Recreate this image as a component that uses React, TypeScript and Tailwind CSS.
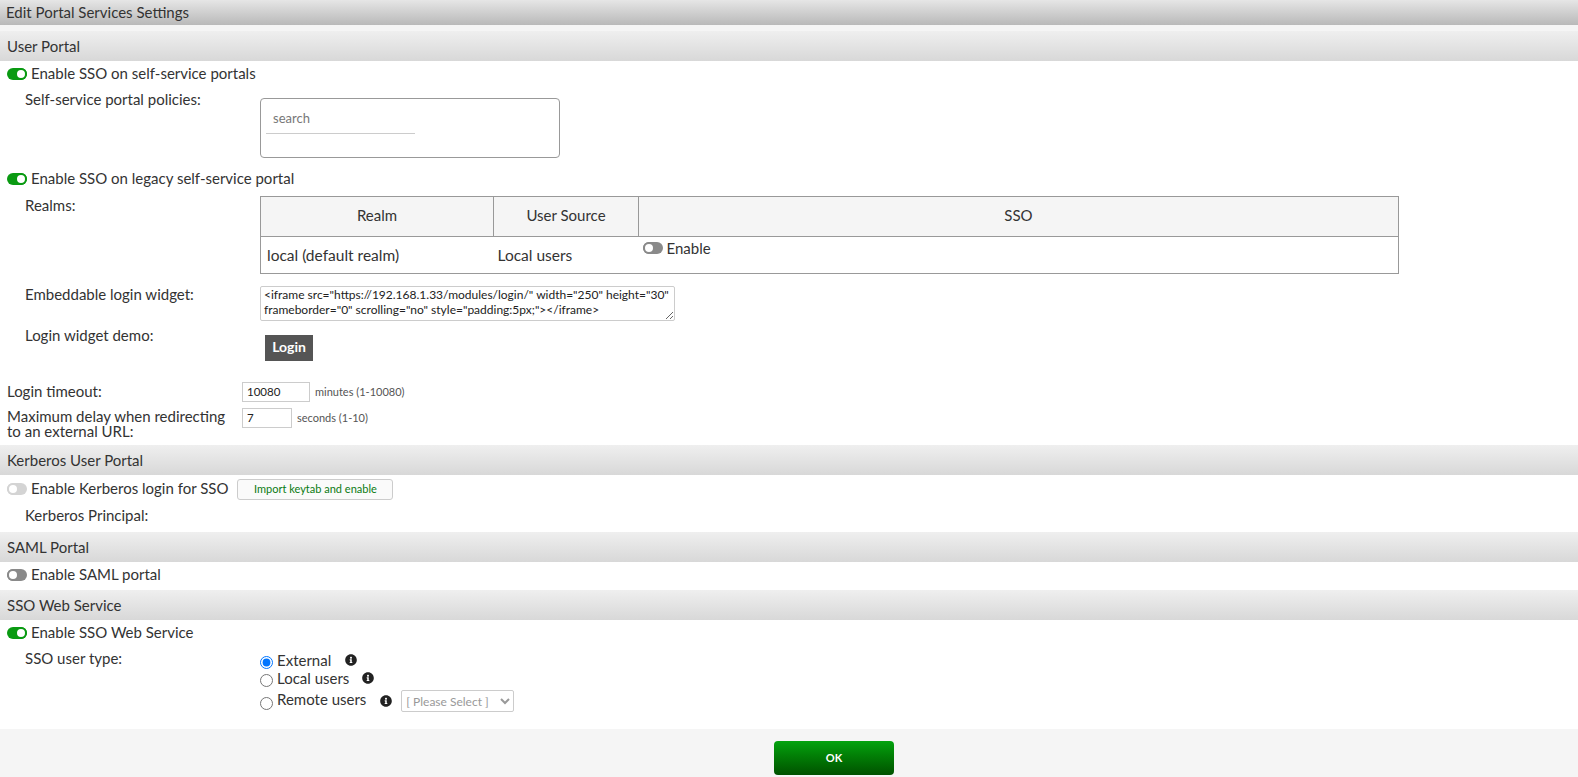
import { FaInfoCircle } from 'react-icons/fa'

const font = { fontFamily: 'Lato, "Open Sans", sans-serif' }

function Toggle({ state }: { state: 'on' | 'off' | 'disabled' }) {
  if (state === 'on') {
    return (
      <span className="flex justify-end items-center w-5 h-3 rounded-full bg-[#0a9a12] shrink-0">
        <span className="w-3 h-3 rounded-full bg-white border-2 border-[#0a9a12]" />
      </span>
    )
  }
  return (
    <span className={`flex items-center w-5 h-3 rounded-full shrink-0 ${state === 'off' ? 'bg-[#8a8a8a]' : 'bg-[#d4d4d4]'}`}>
      <span className={`w-3 h-3 rounded-full bg-white border-2 ${state === 'off' ? 'border-[#8a8a8a]' : 'border-[#d4d4d4]'}`} />
    </span>
  )
}

function SectionHeader({ title }: { title: string }) {
  return (
    <div className="h-[30px] flex items-center pl-[7px] bg-gradient-to-b from-[#efefef] to-[#d8d8d8] text-[15px] text-[#333]">
      {title}
    </div>
  )
}

function ToggleRow({ state, label, className = '' }: { state: 'on' | 'off' | 'disabled'; label: string; className?: string }) {
  return (
    <div className={`flex items-center gap-1 pl-[7px] h-[26px] text-[15px] text-[#333] ${className}`}>
      <Toggle state={state} />
      <span className="-translate-y-[1px]">{label}</span>
    </div>
  )
}

function Field({ label, children, className = '' }: { label: string; children?: React.ReactNode; className?: string }) {
  return (
    <div className={`flex ${className}`}>
      <div className="w-[260px] pl-[25px] text-[15px] text-[#333] leading-[20px] -translate-y-[1px] shrink-0">{label}</div>
      {children && <div className="flex-1 min-w-0">{children}</div>}
    </div>
  )
}

function RadioRow({ label, checked, gap, textClass = '', children, className = '' }: { label: string; checked?: boolean; gap: string; textClass?: string; children?: React.ReactNode; className?: string }) {
  return (
    <div className={`flex items-center text-[15px] text-[#333] leading-[18px] ${className}`}>
      <input type="radio" name="ssotype" defaultChecked={checked} className="m-0 mr-[4px] w-[13px] h-[13px] translate-y-[2px] shrink-0" />
      <span className={textClass}>{label}</span>
      <FaInfoCircle className={`text-[12px] text-[#222] ${gap}`} />
      {children}
    </div>
  )
}

export default function App() {
  return (
    <div style={font} className="min-h-[777px] bg-[#f5f5f5] flex flex-col">
      <div className="h-[25px] flex items-center pl-[6px] bg-gradient-to-b from-[#e6e6e6] to-[#b9b9b9] text-[15px] text-[#333]">
        Edit Portal Services Settings
      </div>
      <div className="h-[6px]" />

      <div className="bg-white h-[698px]">
        <SectionHeader title="User Portal" />
        <ToggleRow state="on" label="Enable SSO on self-service portals" />
        <Field label="Self-service portal policies:" className="mt-[1px] pt-[2px]">
          <div className="mt-[8px] w-[300px] h-[60px] border border-[#999] rounded-[4px] px-[5px] pt-[6px]">
            <div className="w-[149px] h-[29px] border-b border-[#ccc] pl-[7px] text-[13px] leading-[26px] text-[#777]">search</div>
          </div>
        </Field>
        <ToggleRow state="on" label="Enable SSO on legacy self-service portal" className="mt-[8px]" />
        <Field label="Realms:" className="mt-[4px]">
          <table className="w-[1139px] table-fixed border-collapse border border-[#999] text-[15.5px] text-[#333]">
            <thead>
              <tr className="h-[40px] bg-[#f5f5f5] text-[15px]">
                <th className="w-[233px] border border-[#999] font-normal pb-[3px]">Realm</th>
                <th className="w-[145px] border border-[#999] font-normal pb-[3px]">User Source</th>
                <th className="border border-[#999] font-normal pb-[3px]">SSO</th>
              </tr>
            </thead>
            <tbody>
              <tr className="h-[37px]">
                <td className="pl-[6px] pt-[1px]">local (default realm)</td>
                <td className="pl-[4px] pt-[1px]">Local users</td>
                <td className="pl-[4px] align-top text-[15px]">
                  <span className="flex items-center gap-1">
                    <Toggle state="off" />
                    Enable
                  </span>
                </td>
              </tr>
            </tbody>
          </table>
        </Field>
        <Field label="Embeddable login widget:" className="mt-[11px]">
          <textarea
            readOnly
            className="block mt-[1px] w-[415px] h-[35px] border border-[#ccc] rounded-[2px] px-[3px] py-0 text-[12px] leading-[15px] text-[#222] outline-none"
            defaultValue={'<iframe src="https://192.168.1.33/modules/login/" width="250" height="30" frameborder="0" scrolling="no" style="padding:5px;"></iframe>'}
          />
        </Field>
        <Field label="Login widget demo:" className="mt-[5px]">
          <button className="ml-[5px] mt-[9px] block w-[48px] h-[26px] pb-[3px] bg-[#555] text-white text-[14px] font-bold">Login</button>
        </Field>

        <div className="flex mt-[21px] h-[20px]">
          <div className="w-[242px] pl-[7px] text-[15px] text-[#333] leading-[20px] -mt-[1px] shrink-0">Login timeout:</div>
          <input readOnly defaultValue="10080" className="w-[68px] h-[20px] border border-[#ccc] pl-[4px] pb-[1px] text-[11.5px] text-[#222] outline-none" />
          <span className="ml-[5px] text-[11px] leading-[20px] text-[#555]">minutes (1-10080)</span>
        </div>
        <div className="flex mt-[6px]">
          <div className="w-[242px] pl-[7px] pr-[10px] text-[15px] text-[#333] leading-[15px] pt-[1px] shrink-0">Maximum delay when redirecting to an external URL:</div>
          <input readOnly defaultValue="7" className="w-[50px] h-[20px] border border-[#ccc] pl-[4px] pb-[1px] text-[11.5px] text-[#222] outline-none" />
          <span className="ml-[5px] text-[11px] leading-[20px] text-[#555]">seconds (1-10)</span>
        </div>

        <div className="mt-[6px]"><SectionHeader title="Kerberos User Portal" /></div>
        <div className="flex items-center h-[28px]">
          <ToggleRow state="disabled" label="Enable Kerberos login for SSO" />
          <button className="ml-[9px] w-[156px] h-[21px] pt-[1px] border border-[#ccc] rounded-[3px] bg-[#fafafa] text-[11px] text-[#0a7a12]">Import keytab and enable</button>
        </div>
        <Field label="Kerberos Principal:" className="mt-[3px] h-[26px]" />

        <SectionHeader title="SAML Portal" />
        <ToggleRow state="off" label="Enable SAML portal" className="mb-[2px]" />
        <SectionHeader title="SSO Web Service" />
        <ToggleRow state="on" label="Enable SSO Web Service" />
        <Field label="SSO user type:" className="mt-[3px]">
          <div className="pt-[2px]">
            <RadioRow label="External" checked gap="ml-[14px]" />
            <RadioRow label="Local users" gap="ml-[13px]" />
            <RadioRow label="Remote users" gap="ml-[14px]" textClass="-translate-y-[2px]" className="mt-[3px]">
              <select disabled className="ml-[9px] w-[113px] h-[22px] border border-[#ccc] rounded-[2px] text-[12px] text-[#999] bg-white opacity-100">
                <option>[ Please Select ]</option>
              </select>
            </RadioRow>
          </div>
        </Field>
      </div>

      <div className="flex justify-center pt-[12px]">
        <button className="w-[120px] h-[34px] rounded-[4px] bg-gradient-to-b from-[#04a30f] to-[#005200] text-white text-[11px] font-bold ml-[90px]">OK</button>
      </div>
    </div>
  )
}
